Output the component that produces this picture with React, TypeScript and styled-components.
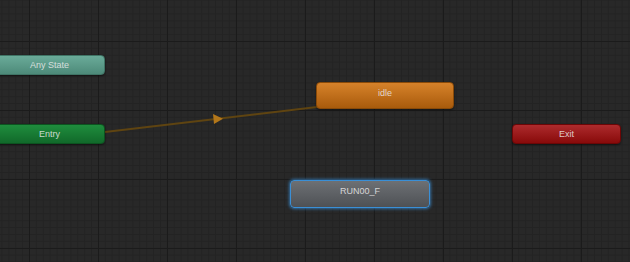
import React from 'react';
import styled, { createGlobalStyle } from 'styled-components';

const GlobalStyle = createGlobalStyle`
  html, body {
    margin: 0;
    padding: 0;
    background: #282828;
  }
`;

type Tone = 'any' | 'entry' | 'state' | 'exit' | 'selected';

const TONES: Record<Tone, { top: string; bottom: string; edge: string }> = {
  any: { top: '#6aab99', bottom: '#4d8a79', edge: '#3f7465' },
  entry: { top: '#1f8d3d', bottom: '#11692a', edge: '#0c5420' },
  state: { top: '#d6822a', bottom: '#a95b0c', edge: '#8a4a08' },
  exit: { top: '#ad2b2d', bottom: '#880a0a', edge: '#6c0606' },
  selected: { top: '#6d7074', bottom: '#4e5155', edge: '#3a8fd6' },
};

interface NodeDef {
  label: string;
  tone: Tone;
  x: number;
  y: number;
  w: number;
  h: number;
  top?: boolean;
}

const NODES: NodeDef[] = [
  { label: 'Any State', tone: 'any', x: -6, y: 55, w: 111, h: 20 },
  { label: 'Entry', tone: 'entry', x: -6, y: 124, w: 111, h: 20 },
  { label: 'idle', tone: 'state', x: 316, y: 82, w: 138, h: 27, top: true },
  { label: 'RUN00_F', tone: 'selected', x: 290, y: 180, w: 140, h: 28, top: true },
  { label: 'Exit', tone: 'exit', x: 512, y: 124, w: 109, h: 20 },
];

const Graph: React.FC = () => (
  <Canvas>
    <Links width="630" height="262" viewBox="0 0 630 262">
      <line x1="105" y1="132" x2="317" y2="107" stroke="#5f4411" strokeWidth="2" />
      <polygon points="213,114 223,118.8 214,124" fill="#b3771a" />
    </Links>
    {NODES.map((n) => (
      <StateNode
        key={n.label}
        $tone={n.tone}
        $top={!!n.top}
        style={{ left: n.x, top: n.y, width: n.w, height: n.h }}
      >
        {n.label}
      </StateNode>
    ))}
  </Canvas>
);

export default function App() {
  return (
    <>
      <GlobalStyle />
      <Graph />
    </>
  );
}

const Canvas = styled.div`
  position: relative;
  width: 630px;
  height: 262px;
  overflow: hidden;
  background-color: #282828;
  background-image:
    linear-gradient(to right, #1b1b1b 0, #1b1b1b 1.5px, transparent 1.5px),
    linear-gradient(to bottom, #1b1b1b 0, #1b1b1b 1.5px, transparent 1.5px),
    linear-gradient(to right, #232323 0, #232323 1px, transparent 1px),
    linear-gradient(to bottom, #232323 0, #232323 1px, transparent 1px);
  background-size: 69px 69px, 69px 69px, 6.9px 6.9px, 6.9px 6.9px;
  background-position: 29px 41px, 29px 41px, 29px 41px, 29px 41px;
`;

const Links = styled.svg`
  position: absolute;
  left: 0;
  top: 0;
`;

const StateNode = styled.div<{ $tone: Tone; $top: boolean }>`
  position: absolute;
  box-sizing: border-box;
  display: flex;
  justify-content: center;
  align-items: ${(p) => (p.$top ? 'flex-start' : 'center')};
  padding-top: ${(p) => (p.$top ? '5px' : '0')};
  border-radius: 4px;
  background: linear-gradient(
    to bottom,
    ${(p) => TONES[p.$tone].top},
    ${(p) => TONES[p.$tone].bottom}
  );
  border: 1px solid ${(p) => TONES[p.$tone].edge};
  box-shadow: ${(p) =>
    p.$tone === 'selected'
      ? '0 0 3px 1px rgba(58, 143, 214, 0.7)'
      : '0 1px 2px rgba(0, 0, 0, 0.5)'};
  font-family: 'Liberation Sans', Arial, sans-serif;
  font-size: 9px;
  line-height: 10px;
  color: rgba(235, 235, 235, 0.85);
  white-space: nowrap;
`;
